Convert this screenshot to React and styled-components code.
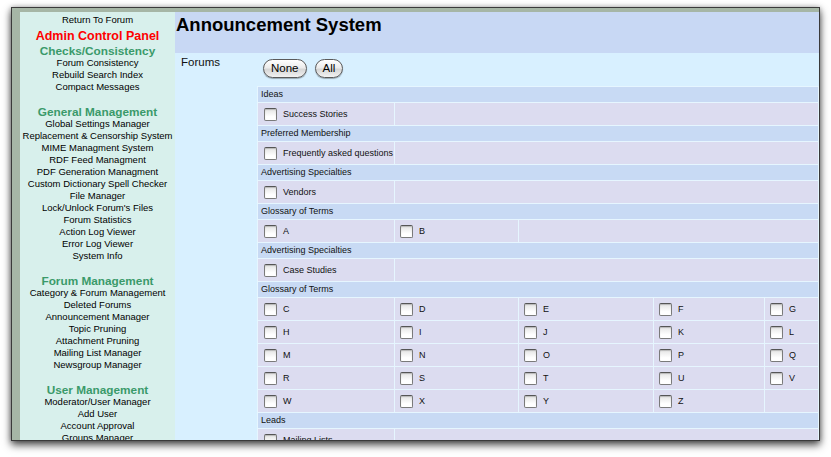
import styled, { createGlobalStyle } from 'styled-components';

const GlobalStyle = createGlobalStyle`
	html, body {
		margin: 0;
		background: #fff;
	}
	body {
		font-family: "Liberation Sans", Arial, sans-serif;
		color: #111;
	}
`;

const Stage = styled('div')`
	padding: 7px 0 0 11px;
	height: 457px;
	box-sizing: border-box;
`;

const Window = styled('div')`
	width: 809px;
	height: 434px;
	box-sizing: border-box;
	border: 1px solid #3a3a3a;
	background: #a6b6a6;
	padding: 4px 0 0 8px;
	box-shadow: 0 4px 8px rgba(0, 0, 0, 0.7), 0 0 5px rgba(0, 0, 0, 0.25);
	overflow: hidden;
`;

const Page = styled('div')`
	display: flex;
	height: 100%;
	overflow: hidden;
`;

const Sidebar = styled('nav')`
	flex: 0 0 155px;
	background: #d8f0ec;
	padding-top: 2px;
	text-align: center;
	font-size: 9.5px;
`;

const NavLink = styled('a')`
	display: block;
	line-height: 12px;
	color: #000;
	text-decoration: none;
	white-space: nowrap;
`;

const PanelTitle = styled('div')`
	font-size: 12.5px;
	font-weight: 700;
	line-height: 20px;
	color: #ff0000;
`;

const NavHeading = styled('div')`
	font-size: 11.8px;
	font-weight: 700;
	line-height: 11px;
	color: #3a9a6a;
	margin-top: ${(p) => (p.$first ? '0' : '14px')};
`;

const Main = styled('main')`
	flex: 1;
	background: #d8f0ff;
	overflow: hidden;
`;

const TitleBar = styled('div')`
	height: 41px;
	background: #c8d8f4;
	padding-left: 1px;

	h1 {
		margin: 0;
		font-size: 18.5px;
		line-height: 26px;
		font-weight: 700;
		color: #000;
	}
`;

const FormRow = styled('div')`
	display: flex;
`;

const Label = styled('div')`
	flex: 0 0 76px;
	padding: 2px 0 0 6px;
	font-size: 11.5px;
	line-height: 14px;
`;

const Field = styled('div')`
	flex: 1;
`;

const Buttons = styled('div')`
	display: flex;
	gap: 8px;
	padding: 6px 0 8px 6px;
`;

const PillButton = styled('button')`
	height: 19px;
	padding: 0 7px;
	border: 1px solid #5a5a5a;
	border-radius: 10px;
	background: linear-gradient(#ffffff, #ececec 45%, #d6d6d6 55%, #f2f2f2);
	box-shadow: 0 1px 1px rgba(0, 0, 0, 0.3);
	font-family: "Liberation Sans", Arial, sans-serif;
	font-size: 11.5px;
	color: #000;
	line-height: 17px;
`;

const ForumGrid = styled('div')`
	display: grid;
	grid-template-columns: 136px 123px 134px 110px 1fr;
	gap: 1px;
	padding: 1px;
	background: #e6f6ff;
	font-size: 9px;
`;

const Category = styled('div')`
	grid-column: 1 / -1;
	height: 15px;
	line-height: 15px;
	padding-left: 3px;
	background: #c8daf4;
`;

const Cell = styled('label')`
	display: flex;
	align-items: center;
	gap: 6px;
	height: 22px;
	padding-left: ${(p) => (p.$first ? '6px' : '5px')};
	background: #dcdcf0;
	white-space: nowrap;
	grid-column: ${(p) => (p.$span ? `span ${p.$span}` : 'auto')};
`;

const Check = styled('input')`
	appearance: none;
	margin: 0;
	width: 13px;
	height: 13px;
	flex: 0 0 13px;
	border: 1px solid #7a7a7a;
	border-top-color: #555;
	border-radius: 2px;
	background: linear-gradient(#e4e4e4, #ffffff 70%);
	box-shadow: inset 0 1px 1px rgba(0, 0, 0, 0.2);
`;

const nav = [
	{
		title: 'Checks/Consistency',
		links: ['Forum Consistency', 'Rebuild Search Index', 'Compact Messages'],
	},
	{
		title: 'General Management',
		links: [
			'Global Settings Manager',
			'Replacement & Censorship System',
			'MIME Managment System',
			'RDF Feed Managment',
			'PDF Generation Managment',
			'Custom Dictionary Spell Checker',
			'File Manager',
			"Lock/Unlock Forum's Files",
			'Forum Statistics',
			'Action Log Viewer',
			'Error Log Viewer',
			'System Info',
		],
	},
	{
		title: 'Forum Management',
		links: [
			'Category & Forum Management',
			'Deleted Forums',
			'Announcement Manager',
			'Topic Pruning',
			'Attachment Pruning',
			'Mailing List Manager',
			'Newsgroup Manager',
		],
	},
	{
		title: 'User Management',
		links: ['Moderator/User Manager', 'Add User', 'Account Approval', 'Groups Manager'],
	},
];

const sections = [
	{ title: 'Ideas', rows: [['Success Stories']] },
	{ title: 'Preferred Membership', rows: [['Frequently asked questions']] },
	{ title: 'Advertising Specialties', rows: [['Vendors']] },
	{ title: 'Glossary of Terms', rows: [['A', 'B']] },
	{ title: 'Advertising Specialties', rows: [['Case Studies']] },
	{
		title: 'Glossary of Terms',
		rows: [
			['C', 'D', 'E', 'F', 'G'],
			['H', 'I', 'J', 'K', 'L'],
			['M', 'N', 'O', 'P', 'Q'],
			['R', 'S', 'T', 'U', 'V'],
			['W', 'X', 'Y', 'Z'],
		],
	},
	{ title: 'Leads', rows: [['Mailing Lists']] },
];

const App = () => {
	return (
		<>
			<GlobalStyle />
			<Stage>
				<Window>
					<Page>
						<Sidebar>
							<NavLink href="#">Return To Forum</NavLink>
							<PanelTitle>Admin Control Panel</PanelTitle>
							{nav.map((group, i) => (
								<div key={group.title}>
									<NavHeading $first={i === 0}>{group.title}</NavHeading>
									{group.links.map((link) => (
										<NavLink href="#" key={link}>
											{link}
										</NavLink>
									))}
								</div>
							))}
						</Sidebar>

						<Main>
							<TitleBar>
								<h1>Announcement System</h1>
							</TitleBar>
							<FormRow>
								<Label>Forums</Label>
								<Field>
									<Buttons>
										<PillButton type="button">None</PillButton>
										<PillButton type="button">All</PillButton>
									</Buttons>
									<ForumGrid>
										{sections.map((section, s) => (
											<div key={s} style={{ display: 'contents' }}>
												<Category>{section.title}</Category>
												{section.rows.map((row, r) => (
													<div key={r} style={{ display: 'contents' }}>
														{row.map((name, c) => (
															<Cell key={name} $first={c === 0}>
																<Check type="checkbox" />
																{name}
															</Cell>
														))}
														{row.length < 5 && <Cell $span={5 - row.length} />}
													</div>
												))}
											</div>
										))}
									</ForumGrid>
								</Field>
							</FormRow>
						</Main>
					</Page>
				</Window>
			</Stage>
		</>
	);
};

export default App;
